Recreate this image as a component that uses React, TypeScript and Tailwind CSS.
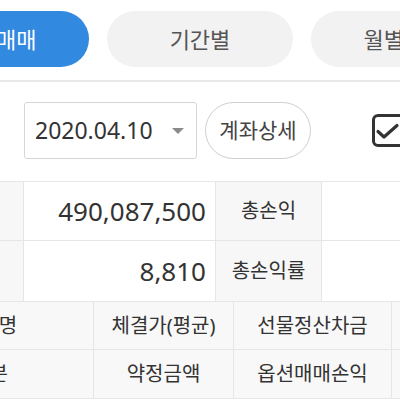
import React from 'react';

const font = 'font-["Noto_Sans","Noto_Sans_CJK_KR",sans-serif]';

const tabs = [
  { label: '당일매매', active: true },
  { label: '기간별', active: false },
  { label: '월별매매', active: false },
];

export default function App() {
  return (
    <div className={`w-[400px] h-[400px] overflow-hidden bg-white text-[#333] ${font}`}>
      <div className="border-b-2 border-[#e8e8e8] pt-[11px] pb-[13px]">
        <div className="flex gap-[18px] ml-[-97px]">
          {tabs.map(t => (
            <div
              key={t.label}
              className={
                t.active
                  ? 'w-[186px] h-[56px] shrink-0 rounded-full bg-[#3189e0] text-white text-[22px] flex items-center justify-center'
                  : 'w-[186px] h-[56px] shrink-0 rounded-full bg-[#f2f2f2] text-[#555] text-[22px] flex items-center justify-center'
              }
            >
              {t.label}
            </div>
          ))}
        </div>
      </div>

      <div className="flex items-center pl-[24px] pt-[20px] h-[77px]">
        <div className="w-[173px] h-[57px] shrink-0 border border-[#d6d6d6] rounded-[3px] flex items-center justify-between pl-[10px] pr-[12px]">
          <span className="text-[23px] text-[#333]">2020.04.10</span>
          <svg width="12" height="6" viewBox="0 0 12 6">
            <path d="M0 0 L12 0 L6 6 Z" fill="#8a8a8a" />
          </svg>
        </div>
        <div className="ml-[8px] w-[106px] h-[57px] shrink-0 rounded-full border-[1.5px] border-[#cfcfcf] flex items-center justify-center text-[21px] text-[#444]">
          계좌상세
        </div>
        <div className="ml-[61px] w-[33px] h-[33px] shrink-0 rounded-[6px] border-[3px] border-[#333]">
          <svg width="27" height="27" viewBox="0 0 27 27">
            <path d="M3 14.5 L9 20 L22 8.5" fill="none" stroke="#333" strokeWidth="3.2" strokeLinecap="round" strokeLinejoin="round" />
          </svg>
        </div>
      </div>

      <div className="mt-[22px] ml-[-76px] border-t border-[#e6e6e6]">
        {[
          { value: '490,087,500', label: '총손익', h: 'h-[59px]' },
          { value: '8,810', label: '총손익률', h: 'h-[61px]' },
        ].map(r => (
          <div key={r.label} className={`flex ${r.h} border-b border-[#e6e6e6]`}>
            <div className="w-[100px] shrink-0 bg-[#f7f7f7] border-r border-[#e6e6e6]" />
            <div className="w-[192px] shrink-0 border-r border-[#e6e6e6] flex items-center justify-end pr-[9px] text-[26px] text-[#333]">
              {r.value}
            </div>
            <div className="w-[106px] shrink-0 bg-[#f7f7f7] border-r border-[#e6e6e6] flex items-center justify-center text-[20px] text-[#333]">
              {r.label}
            </div>
            <div className="flex-1 min-w-[100px]" />
          </div>
        ))}
      </div>

      <div className="ml-[-114px] bg-[#f8f8f8]">
        {[
          ['종목명', '체결가(평균)', '선물정산차금', 'h-[48px]'],
          ['구분', '약정금액', '옵션매매손익', 'h-[49px]'],
        ].map(r => (
          <div key={r[0]} className={`flex ${r[3]} border-b border-[#e6e6e6] text-[20px] text-[#333]`}>
            <div className="w-[208px] shrink-0 border-r border-[#e6e6e6] flex items-center justify-center">{r[0]}</div>
            <div className="w-[140px] shrink-0 border-r border-[#e6e6e6] flex items-center justify-center">{r[1]}</div>
            <div className="w-[158px] shrink-0 border-r border-[#e6e6e6] flex items-center justify-center">{r[2]}</div>
            <div className="w-[100px] shrink-0" />
          </div>
        ))}
      </div>
    </div>
  );
}
